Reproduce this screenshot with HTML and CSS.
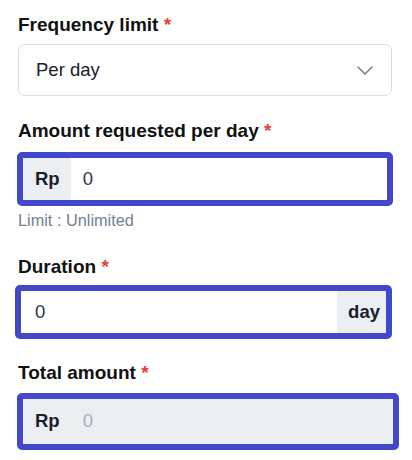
FILE: index.html
```html
<html>
<head>
<link rel="stylesheet" href="styles.css">
</head>
<body>
<div class="form">
  <div class="group">
    <div class="label">Frequency limit <span class="req">*</span></div>
    <div class="select">
      <span>Per day</span>
      <svg class="chevron" width="16" height="9" viewBox="0 0 16 9"><path d="M1 1 L8 8 L15 1" fill="none" stroke="#6b7280" stroke-width="1.4" stroke-linecap="round" stroke-linejoin="round"/></svg>
    </div>
  </div>
  <div class="group amount">
    <div class="label">Amount requested per day <span class="req">*</span></div>
    <div class="field">
      <div class="addon">Rp</div>
      <div class="value">0</div>
    </div>
    <div class="hint">Limit : Unlimited</div>
  </div>
  <div class="group duration">
    <div class="label">Duration <span class="req">*</span></div>
    <div class="field">
      <div class="value">0</div>
      <div class="addon right">day</div>
    </div>
  </div>
  <div class="group total">
    <div class="label">Total amount <span class="req">*</span></div>
    <div class="field disabled">
      <div class="addon">Rp</div>
      <div class="value">0</div>
    </div>
  </div>
</div>
</body>
</html>
```

FILE: styles.css
```css
body {
  margin: 0;
  background: #fff;
  font-family: "Liberation Sans", Arial, sans-serif;
  color: #111;
  }
div.form {
  padding: 14px 0 0 18px;
  }
div.label {
  font-size: 19px;
  line-height: 22px;
  font-weight: bold;
  color: #111;
  margin-bottom: 8px;
  }
span.req {
  color: #e53e3e;
  }
div.select {
  box-sizing: border-box;
  width: 374px;
  height: 52px;
  border: 1px solid #dadde3;
  border-radius: 7px;
  display: flex;
  align-items: center;
  justify-content: space-between;
  padding: 0 18px 0 17px;
  font-size: 18.5px;
  color: #1a202c;
  }
svg.chevron {
  display: block;
  }
div.group.amount {
  margin-top: 24px;
  }
div.group.amount div.label {
  margin-bottom: 10px;
  }
div.group.duration {
  margin-top: 26px;
  }
div.group.duration div.label {
  margin-bottom: 7px;
  }
div.group.total {
  margin-top: 23px;
  }
div.group.total div.label {
  margin-bottom: 9px;
  }
div.field {
  box-sizing: border-box;
  display: flex;
  width: 376px;
  height: 54px;
  margin-left: -1px;
  border: 6px solid #4248c8;
  border-radius: 5px;
  background: #fff;
  overflow: hidden;
  font-size: 18.5px;
  }
div.group.duration div.field {
  width: 377px;
  margin-left: -3px;
  }
div.group.total div.field {
  width: 382px;
  height: 57px;
  }
div.field.disabled {
  background: #eceff2;
  }
div.addon {
  display: flex;
  align-items: center;
  padding: 0 11px 1px 12px;
  background: #eceff2;
  font-weight: bold;
  color: #1a202c;
  }
div.addon.right {
  padding: 0 6px 1px 11px;
  }
div.value {
  flex: 1;
  display: flex;
  align-items: center;
  padding: 0 0 1px 12px;
  color: #2d3748;
  }
div.group.duration div.value {
  padding-left: 14px;
  }
div.field.disabled div.value {
  color: #a0aec0;
  }
div.hint {
  margin-top: 4px;
  font-size: 16.3px;
  line-height: 20px;
  color: #718096;
  }
```
